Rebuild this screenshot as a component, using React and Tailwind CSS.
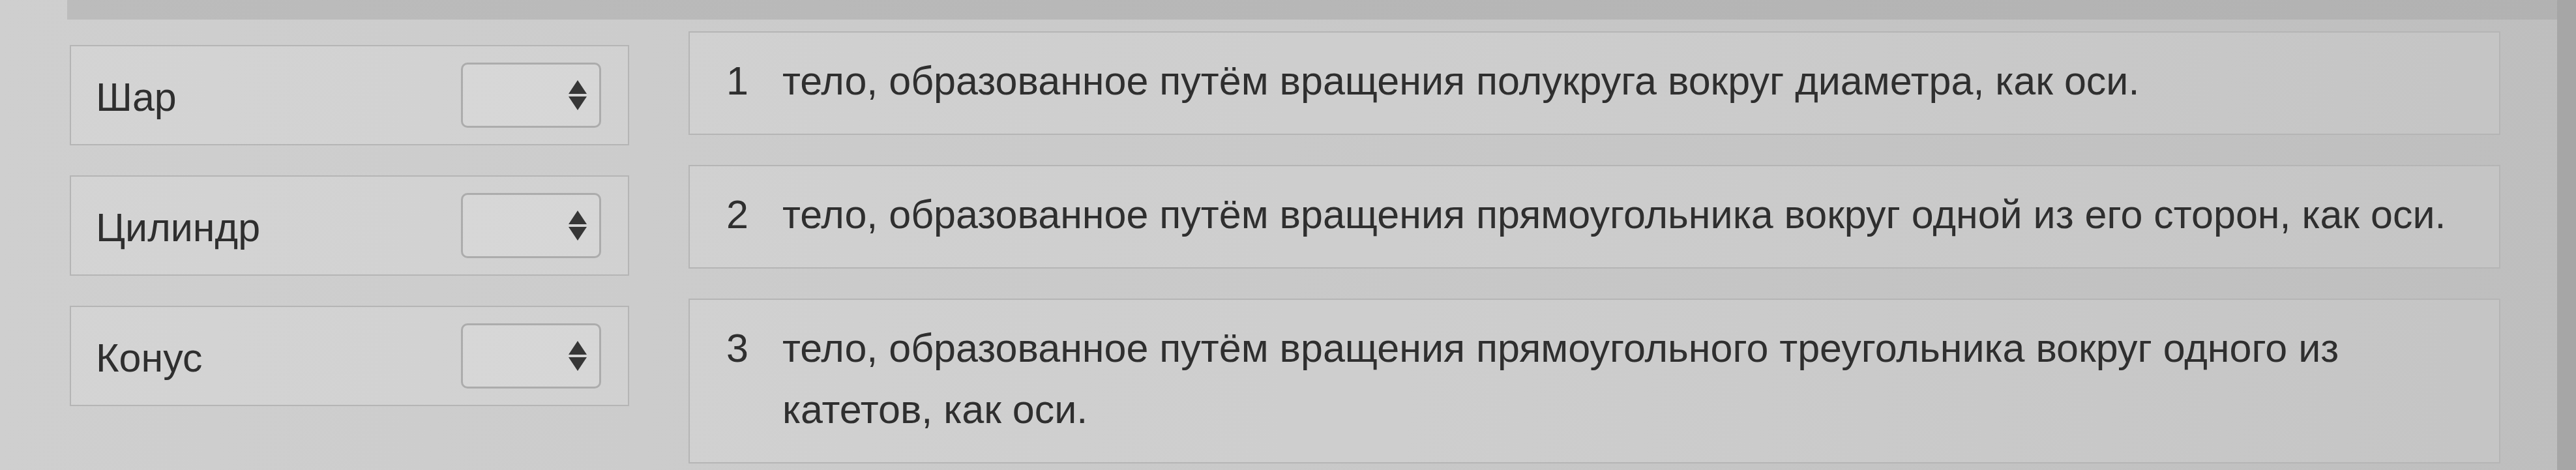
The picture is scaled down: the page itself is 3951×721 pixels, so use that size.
import React from "react";

const items = [
  { label: "Шар" },
  { label: "Цилиндр" },
  { label: "Конус" },
];

const answers = [
  { n: 1, text: "тело, образованное путём вращения полукруга вокруг диаметра, как оси." },
  { n: 2, text: "тело, образованное путём вращения прямоугольника вокруг одной из его сторон, как оси." },
  { n: 3, text: "тело, образованное путём вращения прямоугольного треугольника вокруг одного из катетов, как оси." },
];

function SelectArrows() {
  return (
    <svg width="28" height="46" viewBox="0 0 28 46" className="shrink-0">
      <polygon points="14,0 28,21 0,21" fill="#363636" />
      <polygon points="0,25 28,25 14,46" fill="#363636" />
    </svg>
  );
}

export default function App() {
  return (
    <div className="w-[3951px] h-[721px] flex overflow-hidden bg-gradient-to-r from-[#cfcfcf] via-[#c9c9c9] to-[#bebebe] font-['Liberation_Sans',Arial,sans-serif] text-[#2f2f2f]">
      {/* left margin */}
      <div className="w-[103px] shrink-0" />

      <div className="flex-1 flex flex-col">
        {/* bottom edge of previous block */}
        <div className="h-[30px] shrink-0 bg-gradient-to-r from-[#bcbcbc] to-[#b2b2b2]" />

        <div className="flex gap-[91px] pl-[4px] pr-[87px]">
          {/* Questions */}
          <div className="w-[858px] shrink-0 flex flex-col gap-[46px] pt-[39px]">
            {items.map((item) => (
              <div
                key={item.label}
                className="h-[154px] flex items-center justify-between pl-[38px] pr-[41px] border-2 border-[#b5b5b5] bg-white/10"
              >
                <span className="text-[61px] leading-[94px] pt-[6px]">{item.label}</span>
                <div className="w-[215px] h-[100px] flex items-center justify-end pr-[19px] border-[3px] border-[#acacac] rounded-[10px] bg-white/10">
                  <SelectArrows />
                </div>
              </div>
            ))}
          </div>

          {/* Answers */}
          <div className="flex-1 flex flex-col gap-[46px] pt-[18px]">
            {answers.map((a) => (
              <div
                key={a.n}
                className="flex gap-[52px] pl-[56px] pr-[30px] pt-[27px] pb-[34px] border-2 border-[#b5b5b5] bg-white/10"
              >
                <span className="w-[34px] shrink-0 text-[61px] leading-[94px]">{a.n}</span>
                <p className="text-[61px] leading-[94px]">{a.text}</p>
              </div>
            ))}
          </div>
        </div>
      </div>

      {/* right dark edge */}
      <div className="w-[29px] shrink-0 bg-[#a6a6a6]" />
    </div>
  );
}
